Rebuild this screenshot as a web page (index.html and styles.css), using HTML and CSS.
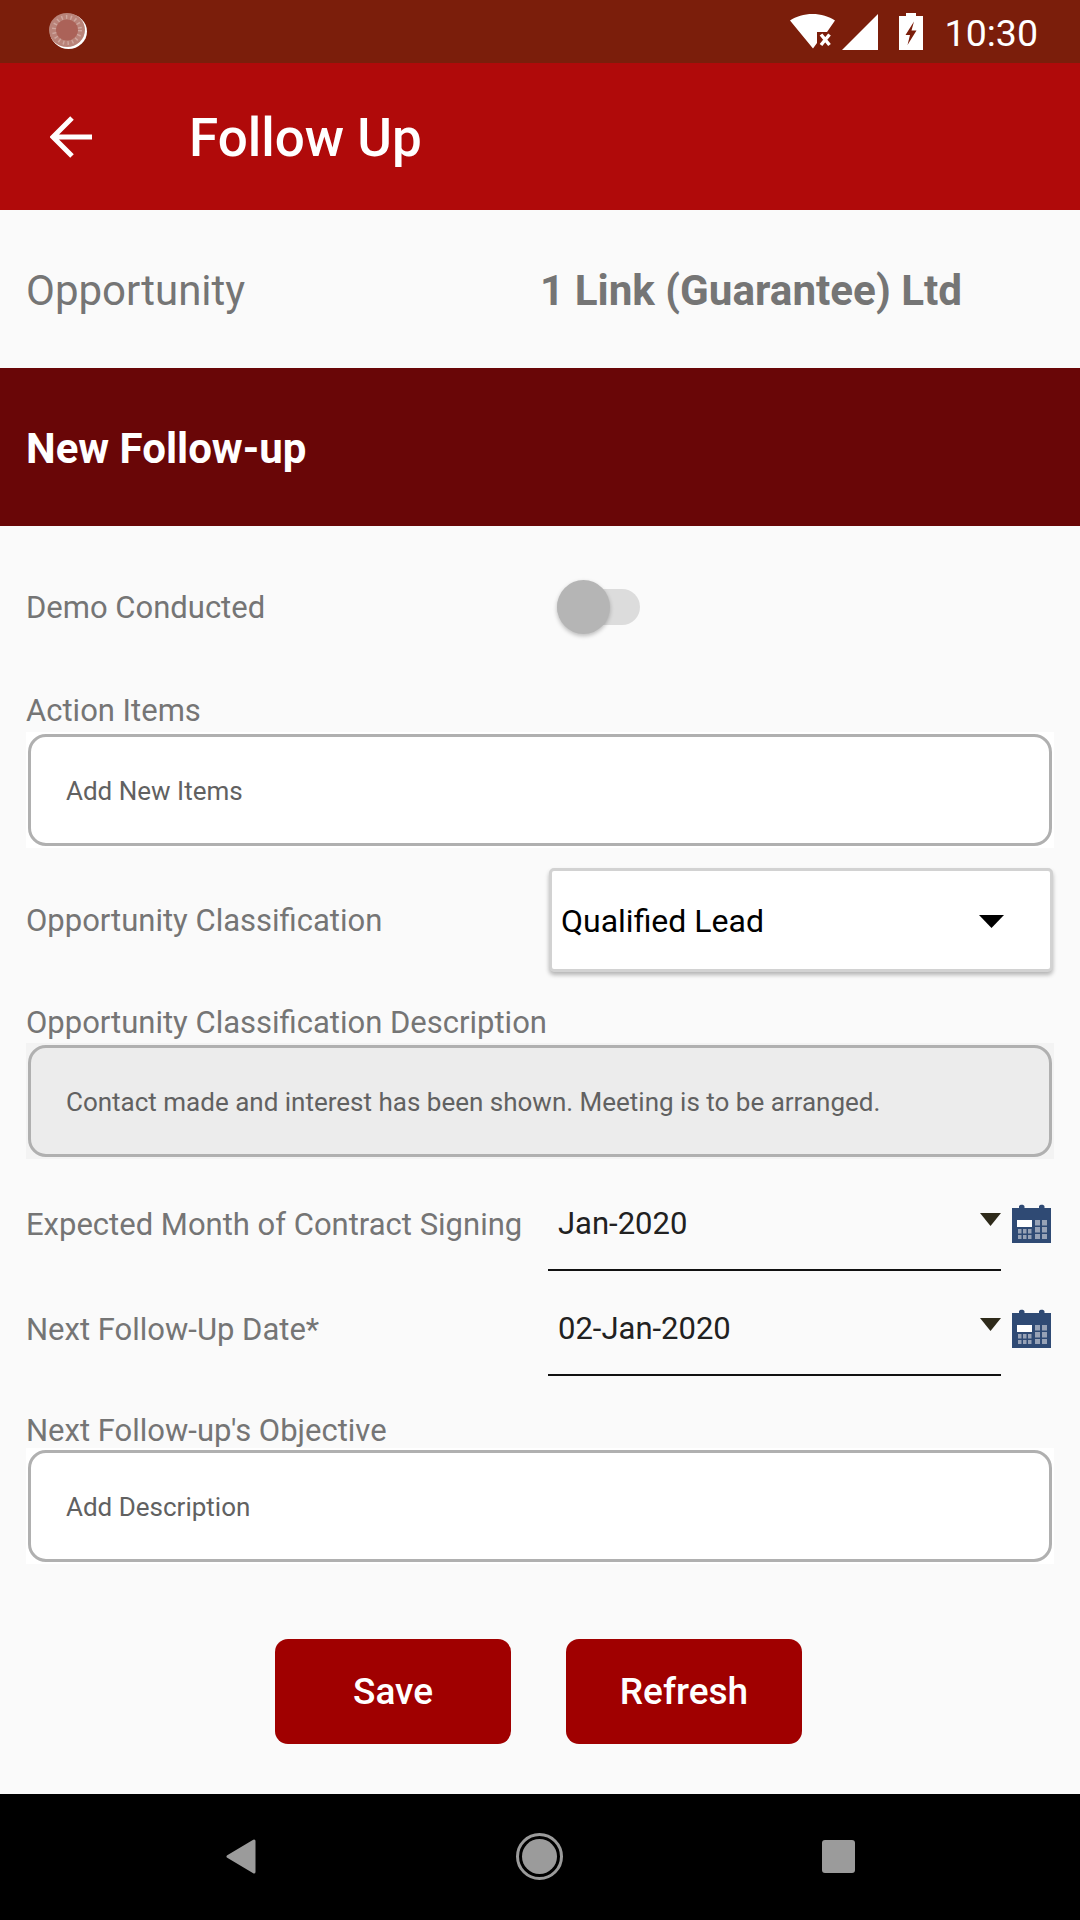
FILE: index.html
```html
<!DOCTYPE html>
<html lang="en">
<head>
<meta charset="utf-8">
<title>Follow Up</title>
<link rel="stylesheet" href="styles.css">
</head>
<body>
<div class="app">
  <div class="statusbar">
    <svg class="spinner" viewBox="0 0 38 36" width="38" height="36">
      <ellipse cx="19.500" cy="18.500" rx="18.500" ry="17.500" fill="#fff"/>
      <ellipse cx="18" cy="17" rx="18" ry="17" fill="#b98379"/>
      <ellipse cx="18" cy="17" rx="11" ry="10.500" fill="#ab6258"/>
      <circle cx="18" cy="17" r="13" fill="none" stroke="#cfa79f" stroke-width="4" stroke-dasharray="1.400 3.200"/>
    </svg>
    <div class="status-right">
      <svg class="wifi" viewBox="0 0 45 35" width="45" height="35">
        <path d="M0 6.500C6 2.500 14 0 22.500 0S39 2.500 45 6.500L37 18H27V29L23 34.500Z" fill="#fff"/>
        <path d="M31 20.500L39.500 31M39.500 20.500L31 31" stroke="#fff" stroke-width="3.400" fill="none"/>
      </svg>
      <svg class="signal" viewBox="0 0 36 36" width="36" height="36">
        <path d="M0 36L36 0V36Z" fill="#fff"/>
      </svg>
      <svg class="battery" viewBox="0 0 24 37" width="24" height="37">
        <path d="M7 0H17V3H24V37H0V3H7Z" fill="#fff"/>
        <path d="M15 8.500L6.500 22H11L8.500 32L17.500 17.500H12.500Z" fill="#7b1e0b"/>
      </svg>
      <span class="clock">10:30</span>
    </div>
  </div>

  <header class="appbar">
    <svg class="back" viewBox="0 0 42 42" width="42" height="42">
      <path d="M42 21H3M22 2L3 21L22 40" fill="none" stroke="#fff" stroke-width="5"/>
    </svg>
    <h1 class="title">Follow Up</h1>
  </header>

  <div class="opportunity">
    <span class="opp-label">Opportunity</span>
    <span class="opp-value">1 Link (Guarantee) Ltd</span>
  </div>

  <div class="section"><span>New Follow-up</span></div>

  <main class="form">
    <div class="row demo-row">
      <span class="label">Demo Conducted</span>
      <span class="switch"><span class="thumb"></span></span>
    </div>

    <div class="field field-action">
      <div class="field-label label-action">Action Items</div>
      <div class="box-zone"><div class="box">Add New Items</div></div>
    </div>

    <div class="row class-row">
      <span class="label">Opportunity Classification</span>
      <div class="dropdown">
        <span>Qualified Lead</span>
        <svg class="drop-arrow" viewBox="0 0 25 13" width="25" height="13"><path d="M0 0H25L12.500 13Z" fill="#000"/></svg>
      </div>
    </div>

    <div class="field field-desc">
      <div class="field-label">Opportunity Classification Description</div>
      <div class="box-zone zone-grey"><div class="box box-grey">Contact made and interest has been shown. Meeting is to be arranged.</div></div>
    </div>

    <div class="row date-row date-first">
      <span class="label">Expected Month of Contract Signing</span>
      <div class="date-input">
        <span>Jan-2020</span>
        <svg class="date-arrow" viewBox="0 0 21 13" width="21" height="13"><path d="M0 0H21L10.500 13Z" fill="#2e2a1a"/></svg>
      </div>
      <svg class="calendar" viewBox="0 0 39 39" width="39" height="39">
        <path d="M0 4H7V2.500C7 0 12.500 0 12.500 2.500V4H27V2.500C27 0 32.500 0 32.500 2.500V4H39V39H0Z" fill="#2f4a74"/>
        <rect x="5" y="16" width="15" height="7" fill="#fff"/>
        <g fill="#97a2b6">
          <rect x="6" y="25" width="3.500" height="4.500"/><rect x="11" y="25" width="3.500" height="4.500"/><rect x="16" y="25" width="3.500" height="4.500"/>
          <rect x="6" y="31" width="3.500" height="4"/><rect x="11" y="31" width="3.500" height="4"/><rect x="16" y="31" width="3.500" height="4"/>
          <rect x="23" y="16" width="5" height="5.500"/><rect x="30" y="16" width="5" height="5.500"/>
          <rect x="23" y="23" width="5" height="5.500"/><rect x="30" y="23" width="5" height="5.500"/>
          <rect x="23" y="30" width="5" height="5"/><rect x="30" y="30" width="5" height="5"/>
        </g>
      </svg>
    </div>

    <div class="row date-row">
      <span class="label">Next Follow-Up Date*</span>
      <div class="date-input">
        <span>02-Jan-2020</span>
        <svg class="date-arrow" viewBox="0 0 21 13" width="21" height="13"><path d="M0 0H21L10.500 13Z" fill="#2e2a1a"/></svg>
      </div>
      <svg class="calendar" viewBox="0 0 39 39" width="39" height="39">
        <path d="M0 4H7V2.500C7 0 12.500 0 12.500 2.500V4H27V2.500C27 0 32.500 0 32.500 2.500V4H39V39H0Z" fill="#2f4a74"/>
        <rect x="5" y="16" width="15" height="7" fill="#fff"/>
        <g fill="#97a2b6">
          <rect x="6" y="25" width="3.500" height="4.500"/><rect x="11" y="25" width="3.500" height="4.500"/><rect x="16" y="25" width="3.500" height="4.500"/>
          <rect x="6" y="31" width="3.500" height="4"/><rect x="11" y="31" width="3.500" height="4"/><rect x="16" y="31" width="3.500" height="4"/>
          <rect x="23" y="16" width="5" height="5.500"/><rect x="30" y="16" width="5" height="5.500"/>
          <rect x="23" y="23" width="5" height="5.500"/><rect x="30" y="23" width="5" height="5.500"/>
          <rect x="23" y="30" width="5" height="5"/><rect x="30" y="30" width="5" height="5"/>
        </g>
      </svg>
    </div>

    <div class="field field-objective">
      <div class="field-label label-tight">Next Follow-up's Objective</div>
      <div class="box-zone"><div class="box">Add Description</div></div>
    </div>

    <div class="actions">
      <button class="btn">Save</button>
      <button class="btn">Refresh</button>
    </div>
  </main>

  <nav class="navbar">
    <svg viewBox="0 0 31 35" width="31" height="35"><path d="M2 17.500L28 2V33Z" fill="#9b9b9b" stroke="#9b9b9b" stroke-width="3" stroke-linejoin="round"/></svg>
    <span class="home"><span class="home-dot"></span></span>
    <span class="recents"></span>
  </nav>
</div>
</body>
</html>
```

FILE: styles.css
```css
* { box-sizing: border-box; }
html, body { margin: 0; padding: 0; }
body { width: 1080px; height: 1920px; overflow: hidden; background: #fafafa; font-family: Roboto, "Liberation Sans", sans-serif; }
.app { width: 1080px; height: 1920px; display: flex; flex-direction: column; }

.statusbar { height: 63px; flex: none; background: #7b1e0b; display: flex; align-items: center; justify-content: space-between; padding: 0 42px 0 49px; }
.spinner { margin-top: -1px; }
.status-right { display: flex; align-items: center; }
.wifi { margin-right: 7px; }
.signal { margin-right: 21px; }
.battery { margin-right: 22px; }
.clock { color: #fff; font-size: 37.500px; line-height: 40px; padding-top: 2px; }

.appbar { height: 147px; flex: none; background: #b00a0a; display: flex; align-items: center; padding-left: 50px; }
.back { flex: none; }
.title { margin: 2px 0 0 97px; color: #fff; font-size: 53px; font-weight: 500; line-height: 60px; }

.opportunity { height: 158px; flex: none; display: flex; align-items: center; padding: 2px 0 0 26px; color: #757575; font-size: 42px; }
.opp-label { width: 514px; }
.opp-value { font-size: 42.200px; font-weight: 700; }

.section { height: 158px; flex: none; background: #690607; color: #fff; display: flex; align-items: center; padding: 2px 0 0 26px; font-size: 42px; font-weight: 700; }

.form { flex: 1; display: flex; flex-direction: column; }
.row { display: flex; align-items: center; padding-left: 26px; }
.label { width: 523px; flex: none; color: #757575; font-size: 31px; }

.demo-row { height: 72px; margin-top: 45px; }
.switch { display: block; position: relative; width: 83px; height: 36px; margin-left: 8px; border-radius: 18px; background: #dcdcdc; }
.thumb { position: absolute; left: 0; top: -9px; width: 53px; height: 54px; border-radius: 50%; background: #b5b5b5; box-shadow: 0 2px 4px rgba(0,0,0,.25); }

.field-label { color: #757575; font-size: 31px; line-height: 40px; height: 40px; padding-left: 26px; }
.label-action { height: 41px; }
.label-tight { height: 34px; line-height: 33px; }
.box-zone { margin: 0 26px; padding: 2px 2px; background: #fff; }
.box { height: 112px; border: 3px solid #b0b0b0; border-radius: 18px; background: #fff; display: flex; align-items: center; padding: 2px 0 0 35px; color: #616161; font-size: 26px; }
.zone-grey { background: #f3f3f3; }
.box-grey { background: #ececec; }

.field-action { margin-top: 48px; }
.class-row { height: 104px; margin-top: 20px; }
.dropdown { width: 504px; height: 104px; background: #fff; border: 3px solid #d2d2d2; border-radius: 5px; box-shadow: 0 3px 4px rgba(0,0,0,.28); display: flex; align-items: center; justify-content: space-between; padding: 2px 46px 0 9px; color: #000; font-size: 32px; }
.field-desc { margin-top: 31px; }

.date-row { height: 105px; position: relative; align-items: flex-start; }
.date-row .label { margin-top: 28px; }
.date-first { margin-top: 19px; }
.date-input { width: 453px; height: 93px; margin-left: -1px; border-bottom: 2px solid #111; display: flex; align-items: flex-start; justify-content: space-between; padding: 27px 0 0 10px; color: #212121; font-size: 31px; }
.date-arrow { margin-top: 8px; }
.calendar { flex: none; margin: 26px 0 0 11px; }

.field-objective { margin-top: 26px; }

.actions { display: flex; justify-content: center; gap: 55px; margin-top: 75px; padding-right: 3px; }
.btn { width: 236px; height: 105px; border: 0; border-radius: 13px; background: #a00000; color: #fff; font-family: Roboto, "Liberation Sans", sans-serif; font-size: 37px; font-weight: 500; }

.navbar { height: 126px; flex: none; background: #000; display: flex; align-items: center; gap: 259px; padding: 0 0 2px 226px; }
.home { width: 47px; height: 47px; border: 3px solid #9b9b9b; border-radius: 50%; display: flex; align-items: center; justify-content: center; }
.home-dot { width: 35px; height: 35px; border-radius: 50%; background: #9b9b9b; }
.recents { width: 33px; height: 33px; border-radius: 3px; background: #9b9b9b; }
```
